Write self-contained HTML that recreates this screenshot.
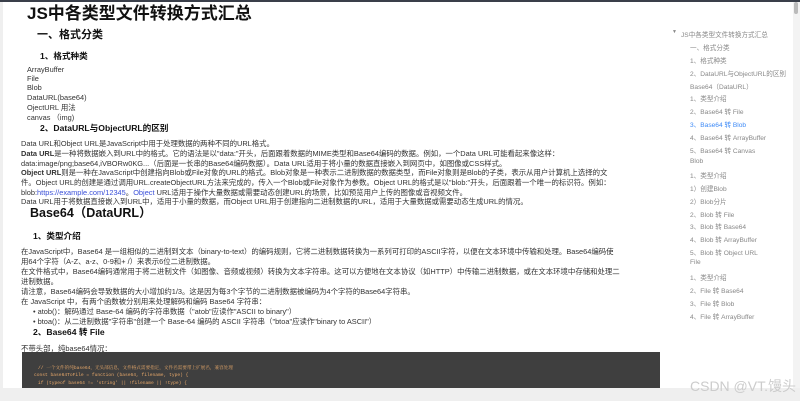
<!DOCTYPE html>
<html><head><meta charset="utf-8"><style>
*{margin:0;padding:0;box-sizing:border-box}
body{width:800px;height:401px;overflow:hidden;background:#efefef;font-family:"Liberation Sans","Noto Sans CJK SC",sans-serif;color:#333;position:relative}
.top{position:absolute;left:0;top:0;width:800px;height:2px;background:#3a3f4a}
.page{position:absolute;left:3px;top:2px;width:657px;height:386px;background:#fff;overflow:hidden}
.side{position:absolute;left:660px;top:2px;width:133px;height:386px;background:#fff}
.sb{position:absolute;left:793px;top:2px;width:7px;height:386px;background:#f3f3f3}
.sbt{position:absolute;left:794px;top:2px;width:4px;height:12px;background:#bbb;border-radius:2px}
.t{position:absolute;white-space:nowrap;font-size:7.4px;line-height:9px;color:#333}
.h1{font-size:17px;font-weight:bold;color:#111}
.h2{font-size:11px;font-weight:bold;color:#111}
.h3{font-size:8.6px;font-weight:bold;color:#111}
.hb{font-size:12.5px;font-weight:bold;color:#111}
a{color:#3a4fd8;text-decoration:none}
.code{position:absolute;left:19px;top:350px;width:640px;height:40px;background:#3f3f3f}
.c{position:absolute;white-space:nowrap;font-family:"Liberation Mono","Noto Serif CJK SC",monospace;font-size:4.6px;color:#e7a86a}
.s{position:absolute;white-space:nowrap;font-size:6.6px;color:#888;left:690px}
.foot{position:absolute;left:690px;top:376px;font-size:14px;color:#ccc;white-space:nowrap}
</style></head><body>
<div class="top"></div>
<div class="page">
<div class="t h1" style="left:24px;top:7px">JS中各类型文件转换方式汇总</div>
<div class="t h2" style="left:34px;top:29px">一、格式分类</div>
<div class="t h3" style="left:37px;top:50px">1、格式种类</div>
<div class="t" style="left:24px;top:63px">ArrayBuffer</div>
<div class="t" style="left:24px;top:72px">File</div>
<div class="t" style="left:24px;top:81px">Blob</div>
<div class="t" style="left:24px;top:91px">DataURL(base64)</div>
<div class="t" style="left:24px;top:101px">OjectURL 用法</div>
<div class="t" style="left:24px;top:111px">canvas （img)</div>
<div class="t h3" style="left:37px;top:122px">2、DataURL与ObjectURL的区别</div>
<div class="t" style="left:18px;top:137px">Data URL和Object URL是JavaScript中用于处理数据的两种不同的URL格式。</div>
<div class="t" style="left:18px;top:147px"><b>Data URL</b>是一种将数据嵌入到URL中的格式。它的语法是以"data:"开头，后面跟着数据的MIME类型和Base64编码的数据。例如，一个Data URL可能看起来像这样：</div>
<div class="t" style="left:18px;top:157px">data:image/png;base64,iVBORw0KG...（后面是一长串的Base64编码数据）。Data URL适用于将小量的数据直接嵌入到网页中，如图像或CSS样式。</div>
<div class="t" style="left:18px;top:166px"><b>Object URL</b>则是一种在JavaScript中创建指向Blob或File对象的URL的格式。Blob对象是一种表示二进制数据的数据类型，而File对象则是Blob的子类，表示从用户计算机上选择的文</div>
<div class="t" style="left:18px;top:176px">件。Object URL的创建是通过调用URL.createObjectURL方法来完成的，传入一个Blob或File对象作为参数。Object URL的格式是以"blob:"开头，后面跟着一个唯一的标识符。例如：</div>
<div class="t" style="left:18px;top:186px">blob:<a>https://example.com/12345</a>。<a>Object</a> URL适用于操作大量数据或需要动态创建URL的场景，比如预览用户上传的图像或音视频文件。</div>
<div class="t" style="left:18px;top:195px">Data URL用于将数据直接嵌入到URL中，适用于小量的数据，而Object URL用于创建指向二进制数据的URL，适用于大量数据或需要动态生成URL的情况。</div>
<div class="t hb" style="left:27px;top:207px">Base64（DataURL）</div>
<div class="t h3" style="left:30px;top:230px">1、类型介绍</div>
<div class="t" style="left:18px;top:245px">在JavaScript中，Base64 是一组相似的二进制到文本（binary-to-text）的编码规则，它将二进制数据转换为一系列可打印的ASCII字符，以便在文本环境中传输和处理。Base64编码使</div>
<div class="t" style="left:18px;top:255px">用64个字符（A-Z、a-z、0-9和+ /）来表示6位二进制数据。</div>
<div class="t" style="left:18px;top:265px">在文件格式中，Base64编码通常用于将二进制文件（如图像、音频或视频）转换为文本字符串。这可以方便地在文本协议（如HTTP）中传输二进制数据，或在文本环境中存储和处理二</div>
<div class="t" style="left:18px;top:275px">进制数据。</div>
<div class="t" style="left:18px;top:285px">请注意，Base64编码会导致数据的大小增加约1/3。这是因为每3个字节的二进制数据被编码为4个字符的Base64字符串。</div>
<div class="t" style="left:18px;top:295px">在 JavaScript 中，有两个函数被分别用来处理解码和编码 Base64 字符串：</div>
<div class="t" style="left:30px;top:305px">• atob()：解码通过 Base-64 编码的字符串数据（"atob"应读作"ASCII to binary"）</div>
<div class="t" style="left:30px;top:315px">• btoa()：从二进制数据"字符串"创建一个 Base-64 编码的 ASCII 字符串（"btoa"应读作"binary to ASCII"）</div>
<div class="t h3" style="left:30px;top:326px">2、Base64 转 File</div>
<div class="t" style="left:18px;top:342px">不带头部，纯base64情况：</div>
<div class="code"></div>
<div class="c" style="left:35px;top:363px">// 一个文件的纯base64，无头部信息，文件格式需要指定，文件名需要带上扩展名，兼容处理</div>
<div class="c" style="left:31px;top:371px">const base64ToFile = function (base64, filename, type) {</div>
<div class="c" style="left:35px;top:379px">if (typeof base64 != 'string' || !filename || !type) {</div>
<div class="c" style="left:41px;top:387px">console.log("参数不正确")</div>
</div>
<div class="side"></div>
<div class="sb"></div><div class="sbt"></div>
<div class="s" style="left:672px;top:29px;font-size:5px">▼</div>
<div class="s" style="left:681px;top:29px">JS中各类型文件转换方式汇总</div>
<div class="s" style="top:42px">一、格式分类</div>
<div class="s" style="top:55px">1、格式种类</div>
<div class="s" style="top:68px">2、DataURL与ObjectURL的区别</div>
<div class="s" style="top:81px">Base64（DataURL）</div>
<div class="s" style="top:93px">1、类型介绍</div>
<div class="s" style="top:106px">2、Base64 转 File</div>
<div class="s" style="top:119px;color:#3d8af7">3、Base64 转 Blob</div>
<div class="s" style="top:132px">4、Base64 转 ArrayBuffer</div>
<div class="s" style="top:145px">5、Base64 转 Canvas</div>
<div class="s" style="top:158px">Blob</div>
<div class="s" style="top:170px">1、类型介绍</div>
<div class="s" style="top:183px">1）创建Blob</div>
<div class="s" style="top:196px">2）Blob分片</div>
<div class="s" style="top:209px">2、Blob 转 File</div>
<div class="s" style="top:221px">3、Blob 转 Base64</div>
<div class="s" style="top:234px">4、Blob 转 ArrayBuffer</div>
<div class="s" style="top:247px">5、Blob 转 Object URL</div>
<div class="s" style="top:259px">File</div>
<div class="s" style="top:272px">1、类型介绍</div>
<div class="s" style="top:285px">2、File 转 Base64</div>
<div class="s" style="top:298px">3、File 转 Blob</div>
<div class="s" style="top:311px">4、File 转 ArrayBuffer</div>
<div class="foot">CSDN @VT.馒头</div>
</body></html>
